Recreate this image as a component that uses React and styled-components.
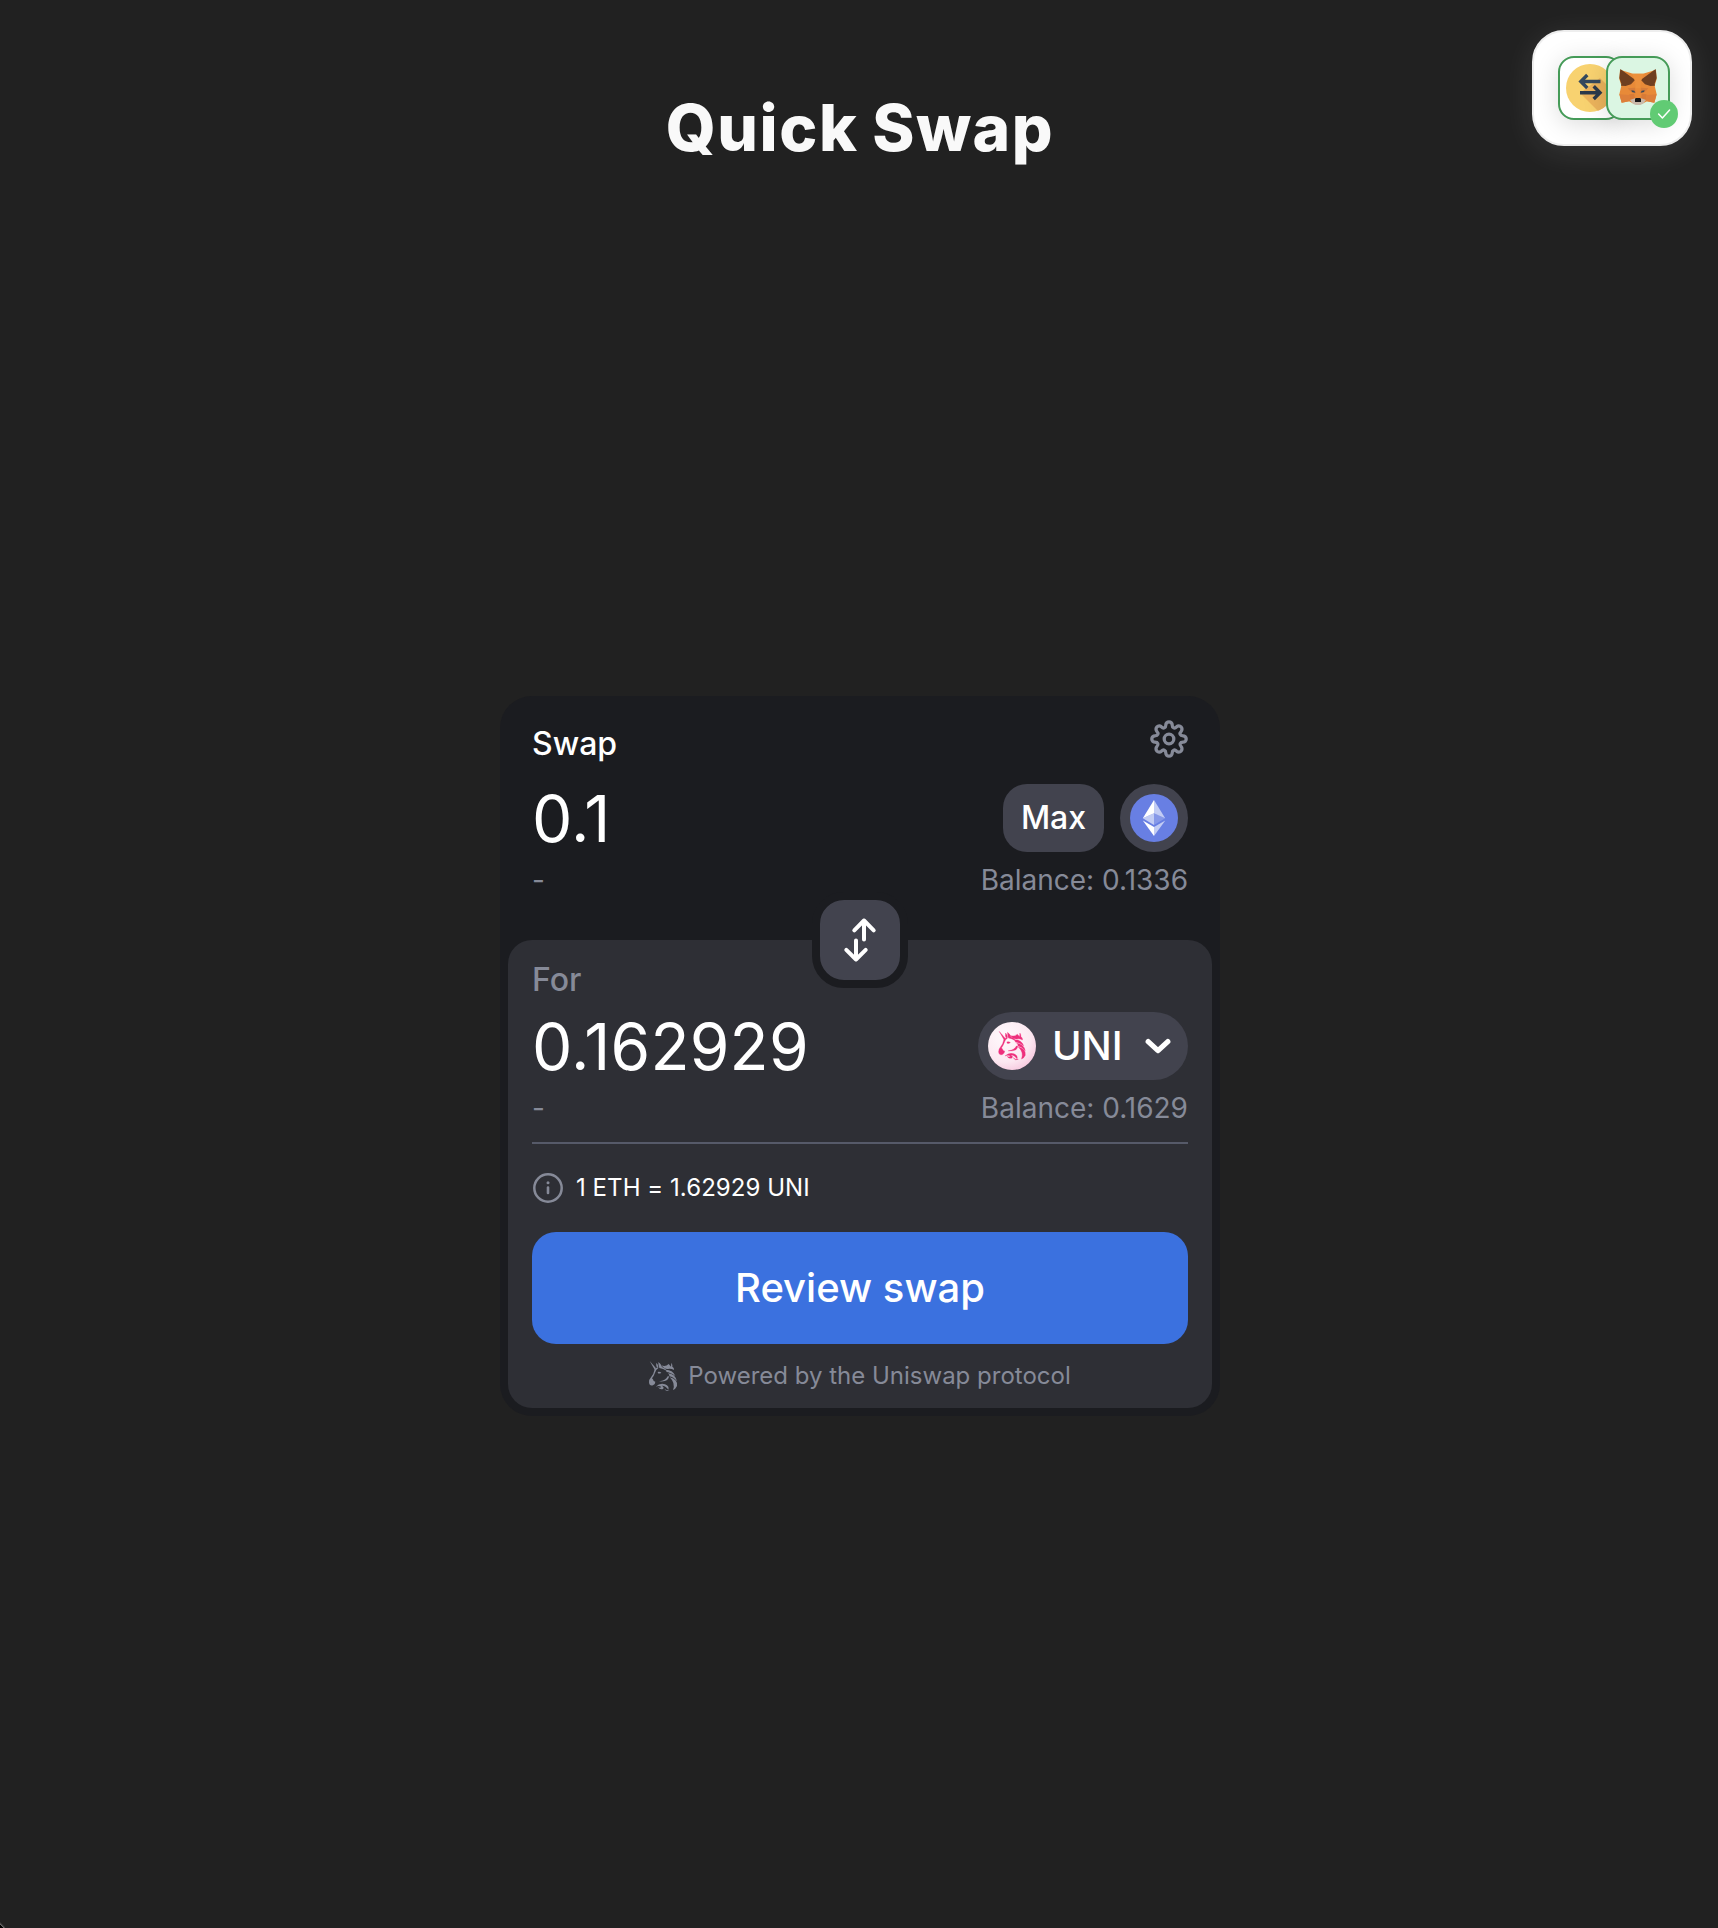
import React from "react";
import styled, { createGlobalStyle } from "styled-components";

const colors = {
  page: "#212121",
  container: "#1b1c20",
  module: "#2e2f35",
  interactive: "#42434e",
  accent: "#3b71df",
  primary: "#ffffff",
  secondary: "#868a98",
  outline: "#565a69",
};

const GlobalStyle = createGlobalStyle`
  *, *::before, *::after { box-sizing: border-box; }
  html, body { margin: 0; background: ${colors.page}; }
  body { font-family: Inter, "Liberation Sans", sans-serif; overflow: hidden; }
  h1, p { margin: 0; }
  button { font: inherit; border: 0; padding: 0; color: inherit; }
  svg { display: block; flex: none; }
`;

const Page = styled.main`
  position: relative;
  display: flex;
  flex-direction: column;
  align-items: center;
  height: 1928px;
  padding: 80px 0 0 2px;
`;

const Title = styled.h1`
  height: 96px;
  line-height: 96px;
  font-size: 64px;
  font-weight: 800;
  letter-spacing: 1.6px;
  word-spacing: -2px;
  color: #f9f9f9;
  white-space: nowrap;
`;

const WindowCorner = styled.div`
  position: absolute;
  left: 0;
  bottom: 0;
  width: 5px;
  height: 6px;
  background: linear-gradient(45deg, #000 0 28%, #6a6a6a 36%, #3d3d3d 48%, ${colors.page} 60%);
`;

const WalletPill = styled.aside`
  position: absolute;
  top: 30px;
  right: 26px;
  display: flex;
  align-items: center;
  width: 160px;
  height: 116px;
  padding: 0 0 0 24px;
  border: 2px solid #eeeeee;
  border-radius: 32px;
  background: #fff;
  box-shadow: 0 6px 32px rgba(255, 255, 255, 0.1);
`;

const WalletTile = styled.div`
  display: flex;
  align-items: center;
  justify-content: center;
  flex: none;
  width: 64px;
  height: 64px;
  padding-bottom: ${(p) => (p.$overlap ? "2px" : "0")};
  border: 2px solid #459b58;
  border-radius: 16px;
  background: ${(p) => p.$bg};
  margin-left: ${(p) => (p.$overlap ? "-16px" : "0")};
  box-shadow: 0 4px 24px rgba(0, 0, 0, 0.14);
  position: relative;
`;

const StatusBadge = styled.span`
  position: absolute;
  right: -10px;
  bottom: -10px;
  display: grid;
  place-items: center;
  width: 28px;
  height: 28px;
  border-radius: 50%;
  background: #61cb74;
`;

const Card = styled.section`
  display: flex;
  flex-direction: column;
  width: 720px;
  height: 720px;
  margin-top: 520px;
  padding: 8px;
  border-radius: 32px;
  background: ${colors.container};
  color: ${colors.primary};
`;

const InputSection = styled.div`
  height: 236px;
  padding: 16px 24px 0;
`;

const OutputSection = styled.div`
  height: 468px;
  padding: 0 24px;
  border-radius: 24px;
  background: ${colors.module};
`;

const SectionHead = styled.header`
  display: flex;
  justify-content: space-between;
  align-items: flex-start;
  height: 64px;
`;

const SectionTitle = styled.div`
  font-size: 32px;
  font-weight: 500;
  line-height: 47px;
  color: ${colors.primary};
`;

const ForLabel = styled.div`
  height: 52px;
  font-size: 32px;
  font-weight: 500;
  line-height: 39px;
  color: ${colors.secondary};
`;

const SwitchRow = styled.div`
  display: flex;
  justify-content: center;
  height: 20px;
`;

const SwitchButton = styled.button`
  flex: none;
  width: 96px;
  height: 96px;
  margin-top: -48px;
  border: 8px solid ${colors.container};
  border-radius: 32px;
  background: ${colors.interactive};
`;

const AmountRow = styled.div`
  display: flex;
  align-items: center;
  justify-content: space-between;
  height: 68px;
`;

const Amount = styled.div`
  font-size: 64px;
  line-height: 69px;
  letter-spacing: 0.25px;
  white-space: nowrap;
`;

const Actions = styled.div`
  display: flex;
  gap: 16px;
`;

const MaxButton = styled.button`
  width: 101px;
  height: 68px;
  border-radius: 24px;
  background: ${colors.interactive};
  font-size: 32px;
  font-weight: 500;
  line-height: 66px;
`;

const TokenButton = styled.button`
  display: flex;
  align-items: center;
  width: ${(p) => p.$width}px;
  height: 68px;
  padding-left: 10px;
  border-radius: 34px;
  background: ${colors.interactive};
`;

const TokenSymbol = styled.span`
  width: 95px;
  padding-left: 16px;
  text-align: left;
  font-size: 40px;
  font-weight: 500;
  line-height: 66px;
`;

const ChevronSlot = styled.span`
  padding: 1px 0 0 14px;
`;

const Balances = styled.div`
  display: flex;
  justify-content: space-between;
  margin-top: 8px;
  height: ${(p) => p.$height}px;
  font-size: 28px;
  line-height: 40px;
  color: ${colors.secondary};
`;

const Divider = styled.hr`
  height: 2px;
  margin: 0;
  border: 0;
  background: ${colors.outline};
`;

const Rate = styled.div`
  display: flex;
  align-items: center;
  height: 88px;
  font-size: 24px;
  gap: 12px;
`;

const RateText = styled.span`
  padding-bottom: 2px;
  letter-spacing: 0.05px;
`;

const ReviewButton = styled.button`
  width: 100%;
  height: 112px;
  border-radius: 24px;
  background: ${colors.accent};
  font-size: 40px;
  font-weight: 500;
  line-height: 110px;
`;

const Powered = styled.footer`
  display: flex;
  align-items: center;
  justify-content: center;
  gap: 10px;
  height: 64px;
  font-size: 24px;
  color: ${colors.secondary};
`;

const PoweredText = styled.span`
  padding-bottom: 2px;
`;

const lobe = (a) => {
  const rot = (x, y) => {
    const t = (a * Math.PI) / 180;
    return `${(19 + x * Math.cos(t) - y * Math.sin(t)).toFixed(2)} ${(19 + x * Math.sin(t) + y * Math.cos(t)).toFixed(2)}`;
  };
  return { start: rot(-3.2, -14), startCtl: rot(-3.2, -11), end: rot(3.2, -14), endCtl: rot(3.2, -11) };
};

const gearPath = () => {
  const lobes = Array.from({ length: 8 }, (_, i) => lobe(i * 45));
  return lobes.reduce((d, l, i) => {
    const next = lobes[(i + 1) % 8];
    return `${d} A3.2 3.2 0 0 1 ${l.end} C${l.endCtl} ${next.startCtl} ${next.start}`;
  }, `M${lobes[0].start}`) + "Z";
};

const GearIcon = () => (
  <svg width="38" height="38" viewBox="0 0 38 38" fill="none" stroke={colors.secondary} strokeWidth="3.3">
    <path d={gearPath()} />
    <circle cx="19" cy="19" r="4.8" />
  </svg>
);

const SwitchIcon = () => (
  <svg width="80" height="80" viewBox="0 0 80 80" fill="none" stroke="#fff" strokeWidth="4" strokeLinecap="round" strokeLinejoin="round">
    <path d="M44 39.5V20.5M34.3 30.4L44 20.5L53.7 30.4" />
    <path d="M36 40.5V59.5M26.3 49.8L36 59.5L45.7 49.8" />
  </svg>
);

const EthIcon = () => (
  <svg width="48" height="48" viewBox="0 0 48 48">
    <circle cx="24" cy="24" r="24" fill="#687fe3" />
    <path d="M24 6v13.3l11.2 5z" fill="#fff" fillOpacity=".6" />
    <path d="M24 6L12.8 24.3l11.2-5z" fill="#fff" />
    <path d="M24 33v9l11.3-15.6z" fill="#fff" fillOpacity=".6" />
    <path d="M24 42v-9l-11.2-6.6z" fill="#fff" />
    <path d="M24 30.9l11.2-6.6-11.2-5z" fill="#fff" fillOpacity=".2" />
    <path d="M12.8 24.3L24 30.9V19.3z" fill="#fff" fillOpacity=".6" />
  </svg>
);

const UnicornShape = () => (
  <>
    <path d="M2 0Q13 12 21 22L17 26Q10 14 2 0Z" />
    <path d="M22 5Q27 9 28 18L24 21Q20 13 22 5Z" />
    <path d="M28 3Q36 8 39 18Q49 21 54 30Q42 22 31 21Q28 12 28 3Z" />
    <path d="M17 25Q22 19 29 20Q20 26 18 35Q15 44 9 52Q13 55 14 60L19 62Q19 70 12 73Q1 76 0 64Q0 55 6 49Q14 40 17 25Z" />
    <path d="M26 33Q32 31 37 35Q32 39 27 37Z" />
    <path d="M37 13Q50 18 59 9L66 17L67 5Q71 11 70 17Q76 19 75 27Q66 22 57 24Q46 25 37 13Z" />
    <path d="M50 26Q71 26 79 45Q64 34 52 33Q54 30 50 26Z" />
    <path d="M57 37Q79 39 84 61Q73 48 61 46Q62 41 57 37Z" />
    <path d="M62 49Q87 55 84 75Q80 84 72 87Q80 66 62 49Z" />
    <path d="M60 46Q60 64 30 61Q50 59 56 46Z" />
    <path d="M20 77Q33 65 48 70Q62 76 58 86Q49 73 38 74Q47 78 42 84Q33 87 27 79Q34 82 37 78Q31 73 20 77Z" />
    <path d="M46 83Q52 89 62 88Q52 93 46 83Z" />
  </>
);

const UnicornIcon = () => (
  <svg width="29" height="30" viewBox="0 0 87 90" fill={colors.secondary}>
    <UnicornShape />
  </svg>
);

const UniTokenIcon = () => (
  <svg width="48" height="48" viewBox="0 0 48 48">
    <defs>
      <radialGradient id="uniBg" cx=".36" cy=".3" r=".76">
        <stop offset="0" stopColor="#fffafd" />
        <stop offset=".7" stopColor="#fce8f1" />
        <stop offset="1" stopColor="#f7c9df" />
      </radialGradient>
    </defs>
    <circle cx="24" cy="24" r="24" fill="url(#uniBg)" />
    <g fill="#ee2f7c" stroke="#ee2f7c" strokeWidth="1" transform="translate(10.6 9.4) scale(.318)">
      <UnicornShape />
    </g>
  </svg>
);

const ChevronIcon = () => (
  <svg width="26" height="17" viewBox="0 0 26 17" fill="none" stroke="#fff" strokeWidth="5.2" strokeLinecap="round" strokeLinejoin="round">
    <path d="M3.2 3.6L13 12.7L22.8 3.6" />
  </svg>
);

const InfoIcon = () => (
  <svg width="32" height="32" viewBox="0 0 32 32" fill="none" stroke={colors.secondary} strokeWidth="2.5" strokeLinecap="round">
    <circle cx="16" cy="16" r="13.7" />
    <path d="M16 15.6V21" strokeWidth="2.6" />
    <circle cx="16" cy="10.8" r="1.5" fill={colors.secondary} stroke="none" />
  </svg>
);

const ExchangeIcon = () => (
  <svg width="48" height="48" viewBox="0 0 48 48">
    <defs>
      <clipPath id="coin"><circle cx="24" cy="24" r="24" /></clipPath>
    </defs>
    <circle cx="24" cy="24" r="24" fill="#f8d270" />
    <path d="M15 28.5L34 14L48 28V48H33L15 30Z" fill="#ebb35c" clipPath="url(#coin)" />
    <g fill="none" stroke="#35495e" strokeWidth="3.4">
      <path d="M34.5 17.5H14.5M21.3 11L14.8 17.5L21.3 24" />
      <path d="M14 28.7H34M27.7 22.3L34 28.7L27.7 35" stroke="#2c3a4b" />
    </g>
  </svg>
);

const FoxIcon = () => (
  <svg width="38" height="36" viewBox="0 0 114 108">
    <path d="M3 2L42 14H72L111 2L113 30L107 50L113 76L106 101L84 97L70 104H44L30 97L8 101L1 76L7 50L1 30Z" fill="#e88a38" />
    <path d="M4 0L44 29L48 33L36 46L20 51L6 50L7 44L1 27Z" fill="#6f3f20" />
    <path d="M110 0L70 29L66 33L78 46L94 51L108 50L107 44L113 27Z" fill="#6f3f20" />
    <path d="M40 14H74L66 36L64 58H50L48 36Z" fill="#ec913d" />
    <path d="M26 58L48 56L50 73L39 71L30 62Z" fill="#d67c3a" />
    <path d="M88 58L66 56L64 73L75 71L84 62Z" fill="#d67c3a" />
    <path d="M1 76L31 78L34 96L8 101Z" fill="#dd7f3a" />
    <path d="M113 76L83 78L80 96L106 101Z" fill="#dd7f3a" />
    <path d="M31 76L46 74L48 90L34 96Z" fill="#d87b37" />
    <path d="M83 76L68 74L66 90L80 96Z" fill="#d87b37" />
    <path d="M37 64L46 65L49 71L39 69Z" fill="#3c4a55" />
    <path d="M77 64L68 65L65 71L75 69Z" fill="#3c4a55" />
    <path d="M33 93L48 88H66L81 93L72 104L64 108H50L42 104Z" fill="#c9b9aa" />
    <path d="M48 89L51 87H63L66 89V99H48Z" fill="#171717" />
  </svg>
);

const CheckIcon = () => (
  <svg width="14" height="12" viewBox="0 0 14 12" fill="none" stroke="#fff" strokeWidth="1.5" strokeLinecap="round" strokeLinejoin="round">
    <path d="M1.6 6L5.4 10L12.6 2" />
  </svg>
);

export default function App() {
  return (
    <>
      <GlobalStyle />
      <Page>
        <Title>Quick Swap</Title>
        <WalletPill>
          <WalletTile $bg="#ffffff">
            <ExchangeIcon />
          </WalletTile>
          <WalletTile $bg="#dbf6e3" $overlap>
            <FoxIcon />
            <StatusBadge>
              <CheckIcon />
            </StatusBadge>
          </WalletTile>
        </WalletPill>

        <Card>
          <InputSection>
            <SectionHead>
              <SectionTitle>Swap</SectionTitle>
              <GearIcon />
            </SectionHead>
            <AmountRow>
              <Amount>0.1</Amount>
              <Actions>
                <MaxButton>Max</MaxButton>
                <TokenButton $width={68}>
                  <EthIcon />
                </TokenButton>
              </Actions>
            </AmountRow>
            <Balances $height={40}>
              <span>-</span>
              <span>Balance: 0.1336</span>
            </Balances>
          </InputSection>

          <OutputSection>
            <SwitchRow>
              <SwitchButton aria-label="Switch tokens">
                <SwitchIcon />
              </SwitchButton>
            </SwitchRow>
            <ForLabel>For</ForLabel>
            <AmountRow>
              <Amount>0.162929</Amount>
              <TokenButton $width={210}>
                <UniTokenIcon />
                <TokenSymbol>UNI</TokenSymbol>
                <ChevronSlot>
                  <ChevronIcon />
                </ChevronSlot>
              </TokenButton>
            </AmountRow>
            <Balances $height={54}>
              <span>-</span>
              <span>Balance: 0.1629</span>
            </Balances>
            <Divider />
            <Rate>
              <InfoIcon />
              <RateText>1 ETH = 1.62929 UNI</RateText>
            </Rate>
            <ReviewButton>Review swap</ReviewButton>
            <Powered>
              <UnicornIcon />
              <PoweredText>Powered by the Uniswap protocol</PoweredText>
            </Powered>
          </OutputSection>
        </Card>
        <WindowCorner />
      </Page>
    </>
  );
}
